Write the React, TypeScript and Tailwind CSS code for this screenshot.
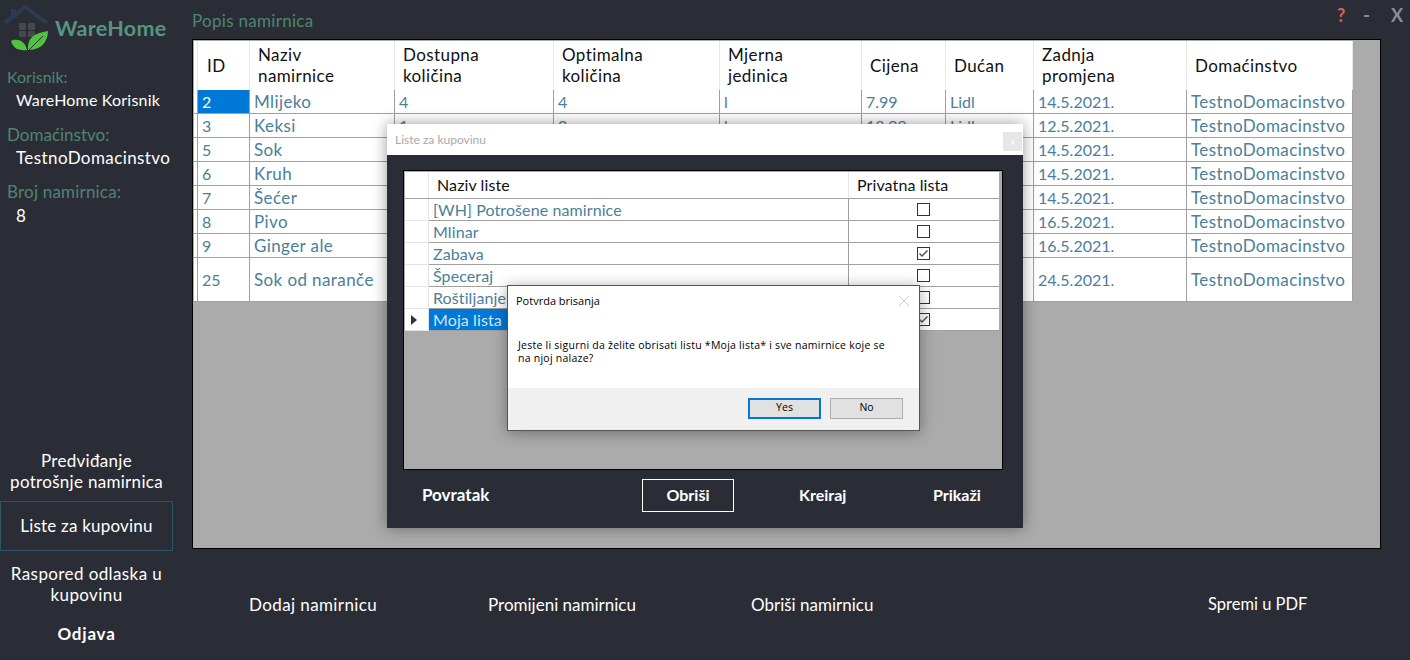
import React from "react";

const font = "font-['Lato','Open_Sans',sans-serif]";

interface Row {
  id: number;
  name: string;
  qty?: string;
  opt?: string;
  unit?: string;
  price?: string;
  shop?: string;
  date: string;
  tall?: boolean;
}

const rows: Row[] = [
  { id: 2, name: "Mlijeko", qty: "4", opt: "4", unit: "l", price: "7.99", shop: "Lidl", date: "14.5.2021." },
  { id: 3, name: "Keksi", qty: "1", opt: "2", unit: "kg", price: "18.99", shop: "Lidl", date: "12.5.2021." },
  { id: 5, name: "Sok", date: "14.5.2021." },
  { id: 6, name: "Kruh", date: "14.5.2021." },
  { id: 7, name: "Šećer", date: "14.5.2021." },
  { id: 8, name: "Pivo", date: "16.5.2021." },
  { id: 9, name: "Ginger ale", date: "16.5.2021." },
  { id: 25, name: "Sok od naranče", date: "24.5.2021.", tall: true },
];

// first column is the narrow row-header strip
const columns = "grid grid-cols-[4px_52px_145px_159px_166px_142px_84px_88px_153px_166px]";

const headers = [
  ["ID"],
  ["Naziv", "namirnice"],
  ["Dostupna", "količina"],
  ["Optimalna", "količina"],
  ["Mjerna", "jedinica"],
  ["Cijena"],
  ["Dućan"],
  ["Zadnja", "promjena"],
  ["Domaćinstvo"],
];

const lists = [
  { name: "[WH] Potrošene namirnice", priv: false },
  { name: "Mlinar", priv: false },
  { name: "Zabava", priv: true },
  { name: "Špeceraj", priv: false },
  { name: "Roštiljanje", priv: false },
  { name: "Moja lista", priv: true, selected: true },
];

function Logo() {
  return (
    <svg width="54" height="56" viewBox="0 0 54 56" className="shrink-0">
      <path d="M5 23 L25 7 L47 23" fill="none" stroke="#2b3b52" strokeWidth="4" />
      <path d="M11 9 h5 v7 h-5 z" fill="#2b3b52" />
      <rect x="19" y="23" width="7" height="7" rx="1" fill="#45484d" />
      <rect x="28" y="23" width="7" height="7" rx="1" fill="#45484d" />
      <rect x="19" y="31" width="7" height="6" rx="1" fill="#45484d" />
      <rect x="28" y="31" width="7" height="6" rx="1" fill="#45484d" />
      <path d="M11 41 C16 38 25 40 27 50 C18 51 13 48 11 41 Z" fill="#4fc23f" />
      <path d="M28 50 C27 38 34 33 48 31 C48 42 41 50 28 50 Z" fill="#4fc23f" />
      <path d="M29 50 L43 36" stroke="#2a2d34" strokeWidth="1" />
    </svg>
  );
}

function CheckBox({ checked }: { checked: boolean }) {
  return (
    <span className="flex h-[13px] w-[13px] items-center justify-center border border-[#333] bg-white">
      {checked && (
        <svg width="11" height="11" viewBox="0 0 11 11">
          <path d="M1.5 5.5 L4 8 L9.5 2.5" fill="none" stroke="#555" strokeWidth="1.5" />
        </svg>
      )}
    </span>
  );
}

function MainTable() {
  return (
    <div className="h-full w-[1160px] pt-px pl-px">
      <div className={`${columns} h-[49px] bg-white text-[17px] leading-[21px] tracking-[0.4px] text-[#111]`}>
        <div className="border-r border-[#e8e8e8]" />
        {headers.map((h, i) => (
          <div
            key={i}
            className={`flex flex-col justify-center border-r border-[#e8e8e8] ${i === 0 ? "pl-[9px]" : "pl-[8px]"} ${
              h.length > 1 ? "pb-[2px]" : ""
            }`}
          >
            {h.map((t) => (
              <span key={t}>{t}</span>
            ))}
          </div>
        ))}
      </div>
      {rows.map((r, i) => (
        <div
          key={r.id}
          className={`${columns} ${r.tall ? "h-[44px]" : "h-[24px]"} border-b border-[#a0a0a0] bg-white text-[16px] leading-[20px] text-[#4a8099]`}
        >
          <div className="border-r border-[#a0a0a0]" />
          {[String(r.id), r.name, r.qty, r.opt, r.unit, r.price, r.shop, r.date, "TestnoDomacinstvo"].map((c, j) => (
            <div
              key={j}
              className={`flex items-center border-r border-[#a0a0a0] pt-px pl-[4px] whitespace-nowrap ${
                j === 1 || j === 8 ? "text-[17px] tracking-[0.4px]" : ""
              } ${i === 0 && j === 0 ? "bg-[#0078d7] text-white" : ""}`}
            >
              {c}
            </div>
          ))}
        </div>
      ))}
    </div>
  );
}

function ListsDialog() {
  return (
    <div className="absolute top-[124px] left-[387px] flex h-[404px] w-[636px] flex-col bg-[#2a2d35] shadow-[0_0_14px_rgba(0,0,0,0.4)]">
      <div className="flex h-[31px] items-center justify-between bg-white pr-[1px] pl-2 text-[12px] text-[#a9a9a9]">
        <span>Liste za kupovinu</span>
        <span className="mt-[4px] flex h-[19px] w-[19px] items-center justify-center bg-[#e6e6e6] text-[9px] font-bold text-[#f8f8f8]">
          x
        </span>
      </div>
      <div className="mt-[15px] ml-4 h-[300px] w-[600px] border border-black bg-[#ababab] pt-px pl-px">
        <div className="w-[594px] bg-white text-[16px] leading-[20px] tracking-[0.1px]">
          <div className="grid h-[27px] grid-cols-[24px_420px_150px] border-b border-[#a0a0a0] text-[#111]">
            <div className="border-r border-[#e8e8e8]" />
            <div className="flex items-center border-r border-[#e8e8e8] pl-2">Naziv liste</div>
            <div className="flex items-center pl-2">Privatna lista</div>
          </div>
          {lists.map((l) => (
            <div key={l.name} className="grid h-[22px] grid-cols-[24px_420px_150px] text-[#4a8099]">
              <div className="flex items-center justify-center border-r border-b border-[#e4e4e4] pr-[6px]">
                {l.selected && (
                  <svg width="6" height="10" viewBox="0 0 6 10">
                    <path d="M0 0 L6 5 L0 10 Z" fill="#333" />
                  </svg>
                )}
              </div>
              <div
                className={`flex items-center border-r border-b border-[#a0a0a0] pl-[4px] ${
                  l.selected ? "bg-[#0078d7] text-[#cfe6f5]" : ""
                }`}
              >
                {l.name}
              </div>
              <div className="flex items-center justify-center border-b border-[#a0a0a0] pr-[2px]">
                <CheckBox checked={l.priv} />
              </div>
            </div>
          ))}
        </div>
      </div>
      <div className="relative flex flex-1 items-center pb-[8px] text-[16px] font-bold text-white">
        <span className="ml-[35px] w-[220px] text-[17px]">Povratak</span>
        <span className="flex h-[33px] w-[92px] items-center justify-center border border-white">Obriši</span>
        <span className="ml-[65px] w-[134px]">Kreiraj</span>
        <span>Prikaži</span>
      </div>
    </div>
  );
}

function ConfirmDialog() {
  return (
    <div className="absolute top-[285px] left-[507px] flex h-[146px] w-[413px] flex-col border border-[#555] bg-white font-['Open_Sans',sans-serif] text-[10.5px] text-black shadow-[0_2px_14px_rgba(0,0,0,0.35)]">
      <div className="flex items-center justify-between pt-[7px] pr-[9px] pl-2">
        <span className="text-[11px]">Potvrda brisanja</span>
        <svg width="12" height="12" viewBox="0 0 12 12">
          <path d="M1 1 L11 11 M11 1 L1 11" stroke="#cfcfcf" strokeWidth="1" />
        </svg>
      </div>
      <div className="mt-[29px] h-[49px] pr-[30px] pl-[10px] leading-[13px] tracking-[0.25px]">
        Jeste li sigurni da želite obrisati listu *Moja lista* i sve namirnice koje se na njoj nalaze?
      </div>
      <div className="flex flex-1 items-start justify-end gap-[9px] bg-[#f0f0f0] pt-[10px] pr-4">
        <span className="flex h-[21px] w-[73px] items-center justify-center border-2 border-[#0078d7] bg-[#e1e1e1]">Yes</span>
        <span className="flex h-[21px] w-[73px] items-center justify-center border border-[#adadad] bg-[#e1e1e1]">No</span>
      </div>
    </div>
  );
}

export default function App() {
  return (
    <div className={`relative flex h-[660px] w-[1410px] overflow-hidden bg-[#2a2d35] ${font} text-white`}>
      <aside className="flex w-[173px] shrink-0 flex-col text-[17px] leading-[24px]">
        <div className="flex h-[56px] items-center">
          <Logo />
          <span className="ml-[1px] text-[21.5px] font-bold tracking-[0.3px] text-[#56957f]">WareHome</span>
        </div>
        <div className="mt-[9px] pl-[7px] text-[16px] text-[#4f8573]">Korisnik:</div>
        <div className="-mt-px pl-4 text-[16px] tracking-[0.2px]">WareHome Korisnik</div>
        <div className="mt-[11px] pl-[7px] text-[#4f8573]">Domaćinstvo:</div>
        <div className="-mt-px pl-4 tracking-[0.4px]">TestnoDomacinstvo</div>
        <div className="mt-[10px] pl-[7px] tracking-[0.2px] text-[#4f8573]">Broj namirnica:</div>
        <div className="mt-0 pl-4">8</div>
        <div className="flex-1" />
        <div className="pb-[9px] text-center leading-[21px] tracking-[0.3px]">
          Predviđanje
          <br />
          potrošnje namirnica
        </div>
        <div className="flex h-[50px] items-center justify-center border border-[#2d5563] tracking-[0.2px]">Liste za kupovinu</div>
        <div className="pt-[12px] text-center leading-[21px] tracking-[0.4px]">
          Raspored odlaska u
          <br />
          kupovinu
        </div>
        <div className="pt-[17px] pb-[14px] text-center font-bold tracking-[0.8px]">Odjava</div>
      </aside>
      <main className="flex flex-1 flex-col pl-[19px]">
        <div className="flex h-[39px] items-start justify-between pt-[8px] pr-[7px]">
          <span className="text-[17px] tracking-[0.3px] text-[#4f8573]">Popis namirnica</span>
          <span className="-mt-[6px] flex text-[18px] font-bold text-[#8a8f96]">
            <span className="text-[#d9605f]">?</span>
            <span className="ml-[18px]">-</span>
            <span className="ml-[21px]">X</span>
          </span>
        </div>
        <div className="h-[510px] w-[1189px] border border-black bg-[#ababab]">
          <MainTable />
        </div>
        <div className="flex flex-1 items-center text-[17px]">
          <span className="ml-[57px] w-[239px] tracking-[0.4px]">Dodaj namirnicu</span>
          <span className="w-[263px]">Promijeni namirnicu</span>
          <span className="w-[457px]">Obriši namirnicu</span>
          <span className="text-[16.5px]">Spremi u PDF</span>
        </div>
      </main>
      <ListsDialog />
      <ConfirmDialog />
    </div>
  );
}
